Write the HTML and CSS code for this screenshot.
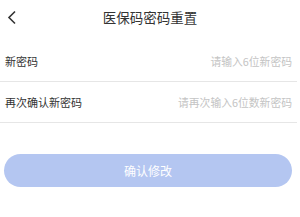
FILE: index.html
```html
<!DOCTYPE html>
<html lang="zh-CN">
<head>
    <meta charset="UTF-8">
    <meta name="viewport" content="width=device-width, initial-scale=1.0">
    <title>医保码密码重置</title>
    <link rel="stylesheet" href="styles.css">
</head>
<body>
    <div class="header">
        <svg class="back" width="20" height="35" viewBox="0 0 20 35">
            <polyline points="15,11.5 9,17.5 15,23.5" fill="none" stroke="#333" stroke-width="1.6"/>
        </svg>
        <h1>医保码密码重置</h1>
    </div>

    <form class="form">
        <label class="row">
            <span class="label">新密码</span>
            <input type="password" placeholder="请输入6位新密码">
        </label>
        <label class="row">
            <span class="label">再次确认新密码</span>
            <input type="password" placeholder="请再次输入6位数新密码">
        </label>
        <button type="button" class="submit">确认修改</button>
    </form>
</body>
</html>
```

FILE: styles.css
```css
body {
    margin: 0;
    width: 300px;
    background: #fff;
    font-family: "Noto Sans CJK SC", "Noto Sans", sans-serif;
    color: #333;
}
.header {
    position: relative;
    height: 35px;
    display: flex;
    align-items: center;
    justify-content: center;
}
.back {
    position: absolute;
    left: 0;
    top: 0;
}
h1 {
    margin: 0;
    font-size: 13.5px;
    font-weight: normal;
    line-height: 35px;
}
.form {
    margin-top: 6px;
}
.row {
    display: flex;
    align-items: center;
    height: 40px;
    width: 297px;
    border-bottom: 1px solid #e6e6e6;
}
.label {
    padding-left: 5px;
    font-size: 11px;
    white-space: nowrap;
}
.row input {
    flex: 1;
    min-width: 0;
    margin-right: 5px;
    border: none;
    outline: none;
    background: transparent;
    text-align: right;
    font-family: inherit;
    font-size: 10.8px;
    padding: 0;
}
.row input::placeholder {
    color: #c4c4c4;
}
.submit {
    display: block;
    margin: 31px 0 0 4px;
    width: 288px;
    height: 33px;
    border: none;
    border-radius: 17px;
    background: #b4c6f1;
    color: #fff;
    font-family: inherit;
    font-size: 12px;
}
```
